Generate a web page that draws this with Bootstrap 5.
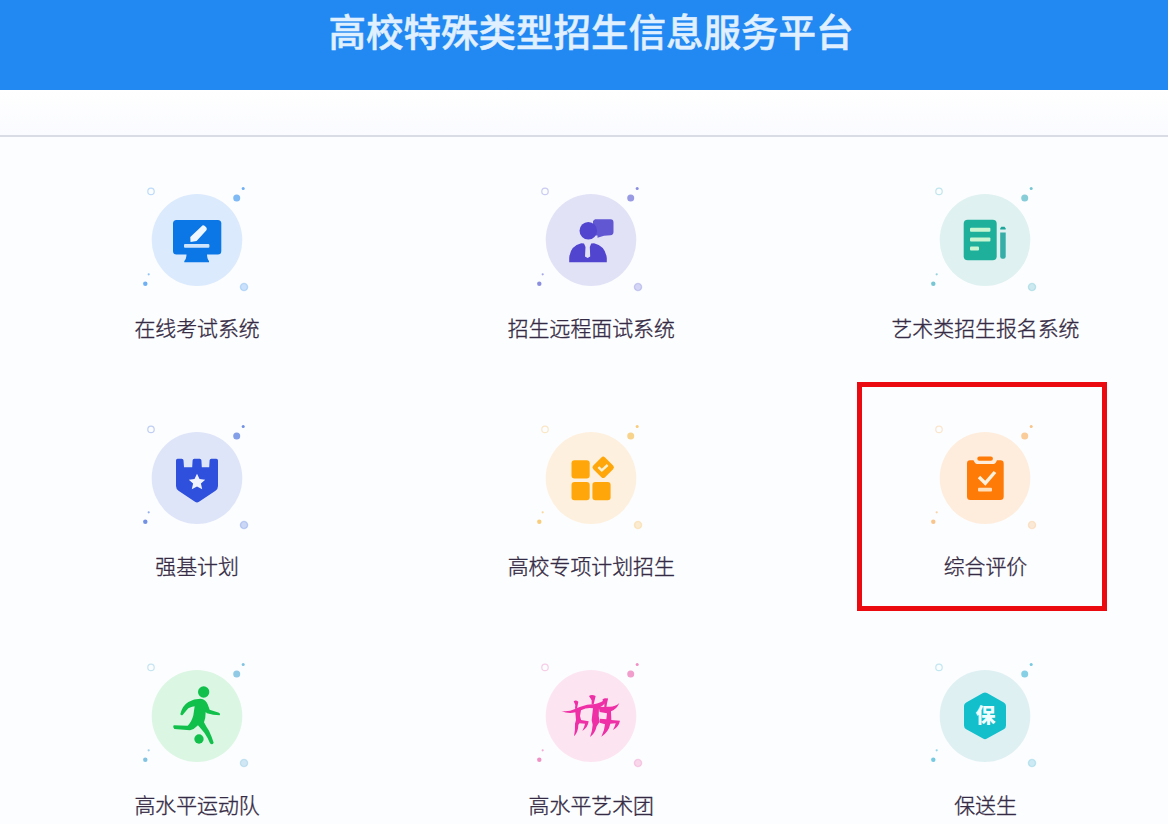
<!DOCTYPE html>
<html lang="zh-CN">

<head>
    <meta charset="UTF-8">
    <meta name="viewport" content="width=device-width, initial-scale=1.0">
    <title>高校特殊类型招生信息服务平台</title>
    <link href="https://cdn.jsdelivr.net/npm/bootstrap@5.3.0/dist/css/bootstrap.min.css" rel="stylesheet">
    <style>
        body {
            font-family: "Noto Sans CJK SC", sans-serif;
            background: #fcfdff;
            color: #352b44;
            height: 824px;
            overflow: hidden;
        }
        .page-wrap {
            width: 1182px;
        }
        .site-header {
            height: 90px;
            background: #2288f2;
        }
        .site-title {
            font-size: 37.5px;
            font-weight: 500;
            line-height: 60px;
            color: #e0f0ff;
            -webkit-text-stroke: .5px;
        }
        .sub-bar {
            height: 47px;
            background: linear-gradient(#fff, #fafbff);
            border-bottom: 2px solid #d9dce5;
        }
        .service-grid {
            display: grid;
            grid-template-columns: repeat(3, 394.2px);
            grid-auto-rows: 238.2px;
        }
        .service {
            padding-top: 43px;
            color: inherit;
        }
        .service svg {
            width: 120px;
            height: 120px;
            flex: none;
        }
        .service-name {
            font-size: 20.9px;
            font-weight: 300;
            line-height: 30px;
            margin-top: 12px;
            -webkit-text-stroke: .35px;
        }
        .service:nth-child(n+7) .service-name {
            margin-top: 13px;
        }
        .highlight-box {
            left: 68.6px;
            top: 7px;
            width: 250px;
            height: 229px;
            border: 5px solid #ea0a10;
        }
        .hex-text {
            font-size: 20px;
            font-weight: 900;
        }
    </style>
</head>

<body>
    <!-- small bubbles around every icon -->
    <svg class="d-none">
        <symbol id="bubbles" viewBox="-60 -60 120 120">
            <circle cx="-46" cy="-48.6" r="3.2" fill="none" stroke="currentColor" stroke-width="1.2" opacity=".35"/>
            <circle cx="39.7" cy="-42" r="3.5" fill="currentColor" opacity=".7"/>
            <circle cx="46.2" cy="-51.6" r="1.5" fill="currentColor" opacity=".8"/>
            <circle cx="-51.7" cy="43.8" r="2.2" fill="currentColor" opacity=".8"/>
            <circle cx="-48.3" cy="34.3" r="1.1" fill="currentColor" opacity=".6"/>
            <circle cx="47" cy="47" r="3.6" fill="currentColor" fill-opacity=".28" stroke="currentColor" stroke-opacity=".3" stroke-width="1.4"/>
        </symbol>
    </svg>

    <div class="page-wrap">
        <header class="site-header text-center">
            <h1 class="site-title m-0">高校特殊类型招生信息服务平台</h1>
        </header>
        <div class="sub-bar"></div>

        <main class="service-grid">
            <a class="service d-flex flex-column align-items-center text-decoration-none">
                <svg viewBox="-60 -60 120 120">
                    <use href="#bubbles" x="-60" y="-60" width="120" height="120" color="#4a9cf0"/>
                    <ellipse rx="45.3" ry="46" fill="#dbeafc"/>
                    <rect x="-24" y="-20" width="48.3" height="34.5" rx="3.5" fill="#0b76e6"/>
                    <path d="M-10.5 14H10Q10 19 12 21V22.3H-12.7V21Q-10.5 19-10.5 14z" fill="#0b76e6"/>
                    <rect x="-13" y="4" width="25.4" height="3.8" rx="1" fill="#cfe5fc"/>
                    <path d="M4.4-13.6Q6-15.4 7.5-14.2L9.2-12.8Q10.6-11 9.2-9.4L-.4 1-6.5 2-6.7-3z" fill="#eef7ff"/>
                </svg>
                <div class="service-name">在线考试系统</div>
            </a>
            <a class="service d-flex flex-column align-items-center text-decoration-none">
                <svg viewBox="-60 -60 120 120">
                    <use href="#bubbles" x="-60" y="-60" width="120" height="120" color="#6d70d8"/>
                    <ellipse rx="45.3" ry="46" fill="#e2e2f7"/>
                    <path d="M4-20.8H19.5Q22.5-20.8 22.5-17.5V-8Q22.5-5 19.5-4.8L13-4.2 6.5-2.2V-4.6H2V-19z" fill="#6157d2"/>
                    <circle cx="-2.7" cy="-9.2" r="8.8" fill="#5145d0"/>
                    <path d="M-21.8 22.2V18Q-21 6-9.8 3.2L-7 3.6-5.5 7-6 16.5-3.4 18-.8 16.5-1.2 7 .2 3.6 3 3.2Q14.5 6 15.8 18V22.2z" fill="#5145d0"/>
                </svg>
                <div class="service-name">招生远程面试系统</div>
            </a>
            <a class="service d-flex flex-column align-items-center text-decoration-none">
                <svg viewBox="-60 -60 120 120">
                    <use href="#bubbles" x="-60" y="-60" width="120" height="120" color="#54b8c8"/>
                    <ellipse rx="45.3" ry="46" fill="#dff1f0"/>
                    <rect x="-21.3" y="-20.2" width="33" height="40.4" rx="4" fill="#1fb09c"/>
                    <g fill="#c9f5d2">
                        <rect x="-15" y="-12.3" width="20.4" height="4" rx="1"/>
                        <rect x="-15" y="-2.6" width="20.4" height="4" rx="1"/>
                        <rect x="-15" y="6.5" width="9" height="4" rx="1"/>
                    </g>
                    <path d="M15.2-10.4V-11.5L16.3-13.2H19.5L20.7-11.5V-10.4z" fill="#1fa69c"/>
                    <path d="M15.2-7.6H20.7V16.5Q20.7 18.8 18.5 18.8H17.4Q15.2 18.8 15.2 16.5z" fill="#36ada6"/>
                </svg>
                <div class="service-name">艺术类招生报名系统</div>
            </a>

            <a class="service d-flex flex-column align-items-center text-decoration-none">
                <svg viewBox="-60 -60 120 120">
                    <use href="#bubbles" x="-60" y="-60" width="120" height="120" color="#4f76dd"/>
                    <ellipse rx="45.3" ry="46" fill="#dfe5f9"/>
                    <path d="M-19.5-19.3H-15.2Q-13.7-19.3-13.5-17.8L-13-10.7H-4.8L-4.4-17.8Q-4.2-19.3-2.8-19.3H2.8Q4.2-19.3 4.4-17.8L4.8-10.7H12.2L12.6-17.8Q12.8-19.3 14.3-19.3H19.3Q21-19.3 21-17.6V8Q21 11 18.5 12.7L2 23.8Q0 25.2-2 23.8L-18.5 12.7Q-21 11-21 8V-17.6Q-21-19.3-19.5-19.3z" fill="#2e50dc"/>
                    <path d="M0-4.3L2.5 1.1 8.2 1.7 3.9 5.6 5.2 11.3 0 8.5-5.2 11.3-3.9 5.6-8.2 1.7-2.5 1.1z" fill="#f0f3ff"/>
                </svg>
                <div class="service-name">强基计划</div>
            </a>
            <a class="service d-flex flex-column align-items-center text-decoration-none">
                <svg viewBox="-60 -60 120 120">
                    <use href="#bubbles" x="-60" y="-60" width="120" height="120" color="#f7c05a"/>
                    <ellipse rx="45.3" ry="46" fill="#fef0de"/>
                    <g fill="#ffa70a">
                        <rect x="-19.5" y="-17.8" width="18.2" height="18.2" rx="3"/>
                        <rect x="-19.5" y="4" width="18.2" height="18.2" rx="3"/>
                        <rect x="1.4" y="4" width="18.2" height="18.2" rx="3"/>
                        <rect x="3.9" y="-19" width="16.6" height="16.6" rx="2.6" transform="rotate(45 12.2 -10.7)"/>
                    </g>
                    <path d="M7.4-10.8L10.8-7.6 16.6-13" fill="none" stroke="#fff0d0" stroke-width="2.4"/>
                </svg>
                <div class="service-name">高校专项计划招生</div>
            </a>
            <a class="service d-flex flex-column align-items-center text-decoration-none position-relative">
                <svg viewBox="-60 -60 120 120">
                    <use href="#bubbles" x="-60" y="-60" width="120" height="120" color="#f8b66e"/>
                    <ellipse rx="45.3" ry="46" fill="#feeddd"/>
                    <path d="M-15-17.7H-11.5Q-10-14-8-14H8.6Q10.6-14 12-17.7H15.5Q18.7-17.7 18.7-14.5V18.5Q18.7 22 15.2 22H-14.7Q-18 22-18 18.5V-14.5Q-18-17.7-15-17.7z" fill="#ff7b08"/>
                    <rect x="-7.7" y="-21.4" width="15.6" height="4.2" rx="2" fill="#ff7b08"/>
                    <path d="M-6-1L.3 5.2 10-6" fill="none" stroke="#fff0dc" stroke-width="3.4"/>
                    <rect x="-7" y="9.8" width="14" height="3.6" rx="1" fill="#ffdfba"/>
                </svg>
                <div class="service-name">综合评价</div>
                <span class="highlight-box position-absolute"></span>
            </a>

            <a class="service d-flex flex-column align-items-center text-decoration-none">
                <svg viewBox="-60 -60 120 120">
                    <use href="#bubbles" x="-60" y="-60" width="120" height="120" color="#62b4d8"/>
                    <ellipse rx="45.3" ry="46" fill="#dcf6e4"/>
                    <g transform="scale(.3333) translate(-216 -190)" fill="#10c04a">
                        <circle cx="236" cy="118" r="17"/>
                        <circle cx="222" cy="259" r="14"/>
                        <path d="M166 184Q172 159 190 148Q207 138 226 138Q243 140 248 155L254 171 282 180Q288 184 284 188Q264 188 246 182L242 178Q242 197 237 209Q244 223 252 234Q260 251 266 270Q262 278 255 272Q248 254 238 240L219 218Q207 231 195 233L148 229Q142 223 146 218L188 219Q200 208 205 188L209 161Q193 163 186 171L173 187Q168 190 166 184z"/>
                    </g>
                </svg>
                <div class="service-name">高水平运动队</div>
            </a>
            <a class="service d-flex flex-column align-items-center text-decoration-none">
                <svg viewBox="-60 -60 120 120">
                    <use href="#bubbles" x="-60" y="-60" width="120" height="120" color="#ec75b8"/>
                    <ellipse rx="45.3" ry="46" fill="#fce5f1"/>
                    <!-- three dancers -->
                    <g transform="scale(.3333) translate(-214 -190)" fill="#ee2fa5">
                        <path d="M208 130Q216 124 228 130L225 142 222 155H216L216 143z"/>
                        <path d="M162 146Q168 141 176 147L174 158 172 168H166L167 157z"/>
                        <path d="M248 141Q256 134 265 139L262 152 260 165H254L254 152z"/>
                        <path d="M125 175Q148 178 164 170L180 163Q202 154 226 154Q243 151 265 135Q257 157 238 165L237 190 240 207 231 221Q226 243 211 253Q218 236 219 216L216 203 220 167Q203 163 184 173L181 190 185 205 176 216Q176 239 163 251Q167 231 166 213L169 202 167 179Q145 184 125 175z"/>
                        <path d="M184 202L207 206Q205 224 188 235Q195 220 196 213L180 212z"/>
                        <path d="M237 163L265 162Q285 164 299 151Q291 170 274 176L275 202 301 204Q297 223 280 232Q287 219 288 212L272 213Q267 238 245 252Q255 233 256 215L240 210 241 198 260 200 262 182 240 178z"/>
                    </g>
                </svg>
                <div class="service-name">高水平艺术团</div>
            </a>
            <a class="service d-flex flex-column align-items-center text-decoration-none">
                <svg viewBox="-60 -60 120 120">
                    <use href="#bubbles" x="-60" y="-60" width="120" height="120" color="#52bcd8"/>
                    <ellipse rx="45.3" ry="46" fill="#dff0f3"/>
                    <path d="M-2-23Q0-24.2 2-23L18.8-13.6Q21-12.3 21-10V9.5Q21 12 18.8 13.2L2 22.6Q0 23.7-2 22.6L-18.8 13.2Q-21 12-21 9.5V-10Q-21-12.3-18.8-13.6z" fill="#12bfcb"/>
                    <text class="hex-text" x="0.5" y="7.4" text-anchor="middle" fill="#effdff">保</text>
                </svg>
                <div class="service-name">保送生</div>
            </a>
        </main>
    </div>

    <script src="https://cdn.jsdelivr.net/npm/bootstrap@5.3.0/dist/js/bootstrap.bundle.min.js"></script>
</body>

</html>
